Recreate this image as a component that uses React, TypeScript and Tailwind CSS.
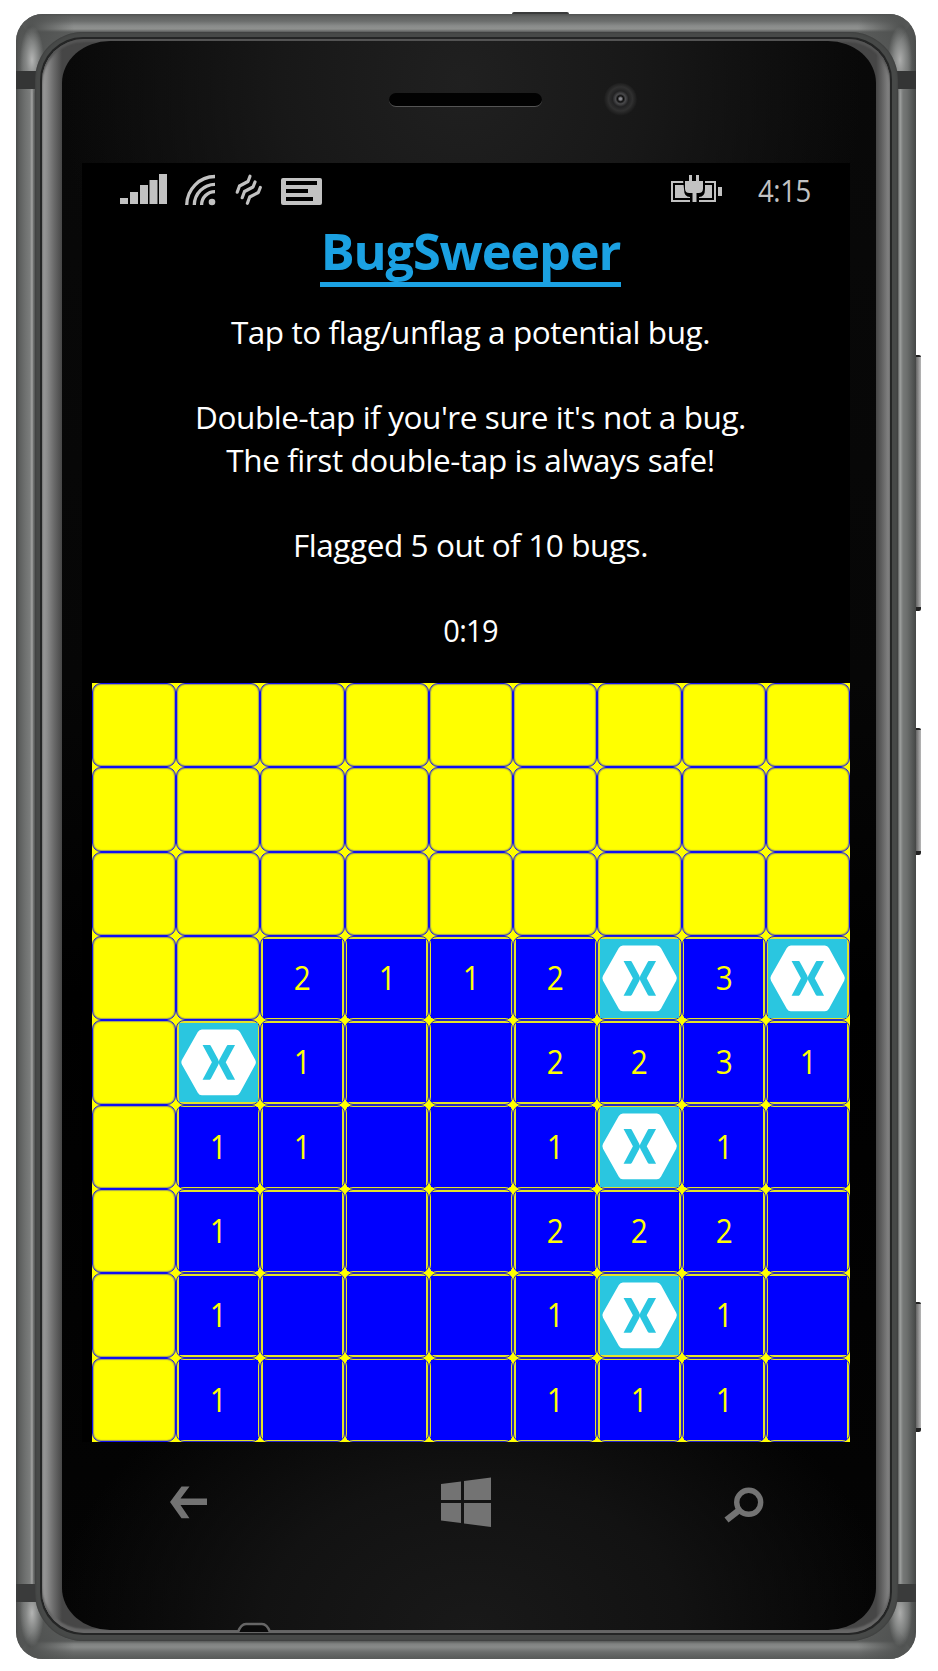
import React from "react";

const board = [
  "#########",
  "#########",
  "#########",
  "##2112X3X",
  "#X1..2231",
  "#11..1X1.",
  "#1...222.",
  "#1...1X1.",
  "#1...111.",
];

function Flag() {
  return (
    <svg viewBox="0 0 78 78" className="block h-full w-full">
      <path
        d="M22.500 6.300H56Q58.500 6.300 60 8.800L75 36.200Q76.400 38.600 75 41L60 68.500Q58.500 71 56 71H22.500Q20 71 18.500 68.500L3 41Q1.600 38.600 3 36.200L18.500 8.800Q20 6.300 22.500 6.300Z"
        fill="#fff"
      />
      <path
        d="M23.200 21.700H30.300Q31 21.700 31.400 22.500L38.600 36L39.200 37.800L39.800 36L47 22.500Q47.400 21.700 48.100 21.700H55.200L46 38.700L55.200 55.700H48.100Q47.400 55.700 47 54.900L39.800 41.400L39.200 39.600L38.600 41.400L31.400 54.900Q31 55.700 30.300 55.700H23.200L32.400 38.700Z"
        fill="#2ac6e0"
      />
    </svg>
  );
}

function Cell({ value }: { value: string }) {
  if (value === "#") {
    return <div className="rounded-[9px] border border-[#1010f0] bg-[#ffff00] shadow-[inset_0_0_1px_1px_#1414ea66]" />;
  }
  return (
    <div className="flex rounded-[8px] border border-[#2626c4] bg-[#e4e428] p-[1.5px]">
      <div
        className={
          "flex w-full items-center justify-center text-[32px] leading-none text-[#ffff00] " +
          (value === "X" ? "bg-[#2ac6e0]" : "bg-[#0000ff]")
        }
      >
        {value === "X" ? <Flag /> : value === "." ? null : <span className="block scale-x-[0.93]">{value}</span>}
      </div>
    </div>
  );
}

function StatusBar() {
  return (
    <div className="flex h-[56px] items-start justify-between pr-[39px] pl-[38px] text-[#c2c2c2]">
      <div className="flex pt-[10px]">
        <svg width="48" height="34" viewBox="120 173 48 34" fill="currentColor">
          <path d="M120 198h8v6h-8zM130 192h8v12h-8zM140 185h8v19h-8zM149.500 180h8v24h-8zM159 174h8v30h-8z" />
        </svg>
        <svg width="31" height="34" viewBox="185 173 31 34" fill="currentColor" className="ml-[17px]">
          <g fill="none" stroke="currentColor" strokeWidth="3.3">
            <path d="M186.700 205A28.300 29 0 0 1 215 176.500" />
            <path d="M194.300 205A20.700 21 0 0 1 215 184.300" />
            <path d="M201.600 205A13.400 13.400 0 0 1 215 191.600" />
          </g>
          <circle cx="212" cy="202" r="3.300" />
        </svg>
        <svg
          width="28"
          height="34"
          viewBox="235 173 28 34"
          fill="none"
          stroke="currentColor"
          strokeWidth="3.2"
          strokeLinecap="round"
          strokeLinejoin="round"
          className="ml-[19px]"
        >
          <path d="M250 176.200L248 181.500L239.500 186L237.200 192.200" />
          <path d="M255 182L253 187L244.500 191.500L242.200 197.700" />
          <path d="M260.300 187.500L258.300 192.500L249.700 197L247.400 203.300" />
        </svg>
        <svg width="41" height="34" viewBox="281 173 41 34" fill="currentColor" className="ml-[18px]">
          <path
            fillRule="evenodd"
            d="M283 178h37q2 0 2 2v23q0 2-2 2h-37q-2 0-2-2v-23q0-2 2-2zM286 181h31v4h-31zM286 189h22v4h-22zM286 197h27v4h-27z"
          />
        </svg>
      </div>
      <div className="flex">
        <svg width="52" height="34" viewBox="671 173 52 34" fill="currentColor" className="mt-[10px]">
          <path d="M672 182h43v19h-43z" fill="none" stroke="currentColor" strokeWidth="2" />
          <path d="M675 185h37v13h-37zM718 187h4v9h-4z" />
          <path d="M683 180h22v9q0 8-6 8v7h-9v-7q-6 0-6-8z" fill="#000" />
          <path d="M689 175h3v6h4v-6h3v6h4v7.500q0 4.500-4.500 4.500h-2v9h-4v-9h-3q-4.500 0-4.500-4.500v-7.500h4z" />
        </svg>
        <span className="mt-[7px] ml-[34.5px] block w-[53.5px] origin-left scale-x-[0.89] text-[31px] leading-[40px] tracking-[-0.5px] whitespace-nowrap">
          4:15
        </span>
      </div>
    </div>
  );
}

function NavBar() {
  return (
    <div className="flex items-center justify-between pt-[34px] pr-[86px] pl-[88px] text-[#737373]">
      <svg width="38" height="52" viewBox="170 1476 38 52" fill="currentColor">
        <path d="M170 1502L181.500 1486.500H189.500L180.500 1498.500H207V1505H180.500L189.500 1518.200H181.500Z" />
      </svg>
      <svg width="52" height="52" viewBox="440 1476 52 52" fill="currentColor">
        <path d="M441 1484L461 1481.500V1500H441ZM464 1481L491 1477.500V1500H464ZM441 1503H461V1523L441 1520.500ZM464 1503H491V1527L464 1523.500Z" />
      </svg>
      <svg width="40" height="52" viewBox="724 1476 40 52" fill="none" stroke="currentColor">
        <circle cx="748.700" cy="1502.300" r="12" strokeWidth="5.400" />
        <path d="M740 1509.500L726.500 1520" strokeWidth="6.500" />
      </svg>
    </div>
  );
}

function SideButtons() {
  const button = "w-full rounded-r-[2px] border-t-2 border-b-4 border-[#222] bg-linear-to-r from-[#666] to-[#b8b8b8]";
  return (
    <div className="flex w-[5px] shrink-0 flex-col pt-[341px]">
      <div className={"h-[256px] " + button} />
      <div className={"mt-[117px] h-[127px] " + button} />
      <div className={"mt-[447px] h-[130px] " + button} />
    </div>
  );
}

function Shell() {
  return (
    <>
      <div className="absolute inset-x-0 top-0 h-[60px] bg-[linear-gradient(180deg,#505251_0px,#626463_3px,#6b6d6c_7px,#8a8c8b_12px,#8f918f_15px,#5a5c5b_18px,#5a5c5b_60px)] [clip-path:polygon(0_0,100%_0,calc(100%_-_36px)_60px,36px_60px)]" />
      <div className="absolute inset-x-0 bottom-0 h-[60px] bg-[linear-gradient(0deg,#585a59_0px,#5f6160_3px,#6b6d6c_7px,#888a89_12px,#808281_15px,#5a5c5b_18px,#5a5c5b_60px)] [clip-path:polygon(36px_0,calc(100%_-_36px)_0,100%_100%,0_100%)]" />
      <div className="absolute inset-0 bg-[radial-gradient(ellipse_12px_34px_at_16px_46px,#b4b5b4_0%,#858786_50%,transparent_100%),radial-gradient(ellipse_12px_34px_at_884px_46px,#acadac_0%,#858786_50%,transparent_100%),radial-gradient(ellipse_12px_34px_at_16px_1599px,#b4b5b4_0%,#858786_50%,transparent_100%),radial-gradient(ellipse_12px_34px_at_884px_1599px,#acadac_0%,#858786_50%,transparent_100%),radial-gradient(circle_44px_at_14px_14px,#4e504f,transparent),radial-gradient(circle_44px_at_886px_14px,#4e504f,transparent),radial-gradient(circle_44px_at_14px_1631px,#4e504f,transparent),radial-gradient(circle_44px_at_886px_1631px,#4e504f,transparent)]" />
      <div className="absolute inset-0 flex flex-col justify-between py-[57px]">
        <div className="h-[18px] bg-[#343535]" />
        <div className="h-[18px] bg-[#3a3b3b]" />
      </div>
    </>
  );
}

function TopBezel() {
  return (
    <div className="flex h-[122px] items-start pt-[42px] pl-[307px]">
      <div className="mt-[10px] h-[14px] w-[153px] rounded-full border-b border-[#555] bg-[#020202]" />
      <div className="ml-[62px] h-[33px] w-[33px] rounded-full bg-[radial-gradient(circle_at_50%_48%,#8a8a90_0_1px,#0c0c0c_3px,#4a4a4c_5px,#222223_8px,#303030_12px,#262626_14px,transparent_17px)]" />
    </div>
  );
}

export default function App() {
  return (
    <div className="flex h-[1671px] w-[938px] flex-col bg-white pt-[12px] pl-[16px] font-['Open_Sans',sans-serif] text-white">
      <div className="ml-[496px] h-[2px] w-[57px] rounded-t-[2px] bg-[#3a3b3b]" />
      <div className="flex h-[1645px]">
        <div className="relative h-full w-[900px] shrink-0 overflow-hidden rounded-[27px] bg-[linear-gradient(90deg,#474948_0px,#5b5d5c_3px,#6e706f_9px,#7b7d7c_14px,#a4a5a4_16px,#5a5c5b_18px,#5a5c5b_882px,#a0a2a1_884px,#767877_887px,#6c6e6d_891px,#565958_896px,#454746_900px)] pt-[17.5px] pr-[18.5px] pb-[18.5px] pl-[18.5px]">
          <Shell />
          <div className="relative h-full w-full rounded-[48px] bg-[#474948] p-[5.5px] shadow-[inset_0_0_2px_#333]">
            <div className="h-full w-full rounded-[43px] bg-[#242525] p-[2px]">
              <div className="h-full w-full overflow-hidden rounded-[42px] bg-[linear-gradient(90deg,#9c9c9c_0px,#8c8c8c_5px,#6a6a6a_12px,#464646_20px,#464646_834px,#585858_838px,#808080_846px,#8a8a8a_848px)] pt-[2px] pr-[14px] pb-[3px] pl-[20px] shadow-[inset_0_3px_2px_#555,inset_0_-4px_2px_#666]">
                <div className="relative h-full w-full rounded-[48px/42px] bg-[radial-gradient(ellipse_400px_420px_at_400px_40px,#202020_0%,#181818_45%,transparent_100%),radial-gradient(ellipse_420px_300px_at_410px_1589px,#191919_0%,#121212_50%,transparent_100%),linear-gradient(180deg,#090909_0%,#060606_40%,#000_60%,#040404_100%)] pl-[20px]">
                  <svg width="36" height="12" viewBox="0 0 36 12" className="absolute -bottom-[3px] left-[174px]">
                    <path d="M2 11Q5 3 10 3H26Q31 3 34 11" fill="#0a0a0a" stroke="#666" strokeWidth="2.500" />
                  </svg>
                  <TopBezel />
                  <div className="h-[1279px] w-[768px] bg-black">
                    <StatusBar />
                    <div className="flex h-[464px] flex-col items-center pl-[9px]">
                      <h1 className="flex h-[68px] w-[301px] justify-center border-b-[5px] border-[#1ba1e2] text-[50.5px] leading-[63px] font-bold tracking-[-1.15px] whitespace-nowrap text-[#1ba1e2]">
                        BugSweeper
                      </h1>
                      <div className="mt-[24px] text-center text-[31.5px] leading-[42.5px] tracking-[-0.43px] whitespace-pre">
                        {"Tap to flag/unflag a potential bug.\n\nDouble-tap if you're sure it's not a bug.\nThe first double-tap is always safe!\n\nFlagged 5 out of 10 bugs.\n\n"}
                        <span className="inline-block scale-x-[0.92] tracking-[-0.8px]">0:19</span>
                      </div>
                    </div>
                    <div className="ml-[10px] grid h-[759px] w-[758px] grid-cols-9 grid-rows-9 bg-[#ffff00]">
                      {board.flatMap((row, r) => row.split("").map((v, c) => <Cell key={r + "-" + c} value={v} />))}
                    </div>
                  </div>
                  <div className="w-[768px]">
                    <NavBar />
                  </div>
                </div>
              </div>
            </div>
          </div>
        </div>
        <SideButtons />
      </div>
    </div>
  );
}
